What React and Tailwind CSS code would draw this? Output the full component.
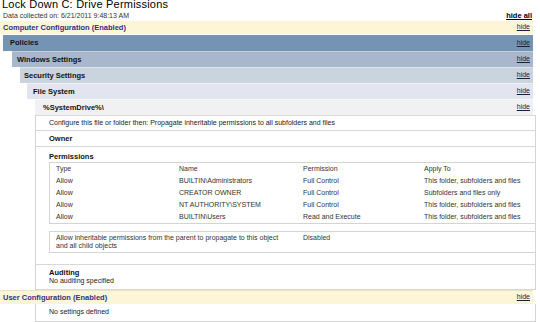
import React from 'react';

const perms = [
  { type: 'Allow', name: 'BUILTIN\\Administrators', perm: 'Full Control', apply: 'This folder, subfolders and files' },
  { type: 'Allow', name: 'CREATOR OWNER', perm: 'Full Control', apply: 'Subfolders and files only' },
  { type: 'Allow', name: 'NT AUTHORITY\\SYSTEM', perm: 'Full Control', apply: 'This folder, subfolders and files' },
  { type: 'Allow', name: 'BUILTIN\\Users', perm: 'Read and Execute', apply: 'This folder, subfolders and files' },
];

const Hide = () => (
  <span className="font-normal underline text-[#1c1c3c] text-[7px]">hide</span>
);

const App = () => {
  return (
    <div className="w-[540px] h-[322px] overflow-hidden bg-white font-['Liberation_Sans',Arial,sans-serif] text-[7px] text-[#222]">
      <div className="text-[11px] leading-[11px] -mt-[1px] pl-[2px] text-black tracking-[0.2px]">Lock Down C: Drive Permissions</div>
      <div className="flex justify-between items-end h-[10px] pl-[3px] pr-[8px]">
        <span className="text-[7px] leading-[8px] text-[#333]">Data collected on: 6/21/2011 9:48:13 AM</span>
        <span className="font-bold underline text-black text-[7.5px] leading-[8px]">hide all</span>
      </div>

      <div className="w-[536px] mt-px">
        {/* Computer configuration */}
        <div className="flex justify-between items-center h-[13px] w-[533px] bg-[#fdf6d6] pl-[3px] pr-[3px]">
          <span className="font-bold text-[7.5px] text-[#2e2e86]">Computer Configuration (Enabled)</span>
          <Hide />
        </div>

        <div className="flex justify-between items-center h-[16px] w-[530px] ml-[3px] mt-px bg-[#7594b4] pl-[7px] pr-[3px]">
          <span className="font-bold text-[7.5px] text-[#111]">Policies</span>
          <Hide />
        </div>
        <div className="flex justify-between items-center h-[16px] w-[521px] ml-[12px] bg-[#a8b7cb] border-t border-[#c2cddb] pl-[5px] pr-[3px]">
          <span className="font-bold text-[7.5px] text-[#111]">Windows Settings</span>
          <Hide />
        </div>
        <div className="flex justify-between items-center h-[16px] w-[513px] ml-[20px] bg-[#c9d4df] border-t border-[#dde4eb] pl-[4px] pr-[3px]">
          <span className="font-bold text-[7.5px] text-[#111]">Security Settings</span>
          <Hide />
        </div>
        <div className="flex justify-between items-center h-[16px] w-[506px] ml-[27px] bg-[#e2e5ef] border-t border-[#eef0f5] pl-[6px] pr-[3px]">
          <span className="font-bold text-[7.5px] text-[#111]">File System</span>
          <Hide />
        </div>
        <div className="flex justify-between items-center h-[16px] w-[498px] ml-[35px] bg-[#f1f1f3] border-t border-[#f8f8f8] pl-[8px] pr-[3px]">
          <span className="font-bold text-[7.5px] text-[#111]">%SystemDrive%\</span>
          <Hide />
        </div>

        {/* Folder content */}
        <div className="ml-[35px] w-[501px] border-l border-r border-[#d4d4d4]">
          <div className="h-[16px] flex items-center pl-[13px] border-t border-b border-[#d8d8d8]">
            Configure this file or folder then: Propagate inheritable permissions to all subfolders and files
          </div>
          <div className="h-[16px] flex items-center pl-[13px] border-b border-[#d8d8d8]">
            <span className="font-bold text-[7.5px] text-[#111]">Owner</span>
          </div>
          <div className="pl-[13px] pt-[4px]">
            <div className="font-bold text-[7.5px] leading-[11px] text-[#111]">Permissions</div>
            <div className="border-l border-t border-b border-[#d4d4d4] text-[#333]">
              {[{ type: 'Type', name: 'Name', perm: 'Permission', apply: 'Apply To' }, ...perms].map((r, i) => (
                <div key={i} className="grid grid-cols-[123px_124px_121px_1fr] h-[12px] items-center pl-[6px]">
                  <span>{r.type}</span>
                  <span>{r.name}</span>
                  <span>{r.perm}</span>
                  <span>{r.apply}</span>
                </div>
              ))}
            </div>
            <div className="mt-[7px] h-[22px] border-l border-t border-b border-[#d4d4d4] grid grid-cols-[247px_1fr] pl-[6px] pt-[2px] text-[#333] leading-[8px]">
              <span>Allow inheritable permissions from the parent to propagate to this object<br />and all child objects</span>
              <span>Disabled</span>
            </div>
          </div>
          <div className="mt-[11px] h-[26px] border-t border-b border-[#d8d8d8] pl-[13px] pt-[3px]">
            <div className="font-bold text-[7.5px] leading-[9px] text-[#111]">Auditing</div>
            <div className="leading-[8px]">No auditing specified</div>
          </div>
        </div>

        {/* User configuration */}
        <div className="flex justify-between items-center h-[14px] w-[533px] bg-[#fdf6d6] pl-[3px] pr-[3px] border-t border-[#ebe4c4]">
          <span className="font-bold text-[7.5px] text-[#2e2e86]">User Configuration (Enabled)</span>
          <Hide />
        </div>
        <div className="ml-[35px] w-[501px] h-[18px] flex items-center pl-[13px] border-l border-r border-b border-[#d4d4d4]">
          No settings defined
        </div>
      </div>
    </div>
  );
};

export default App;
